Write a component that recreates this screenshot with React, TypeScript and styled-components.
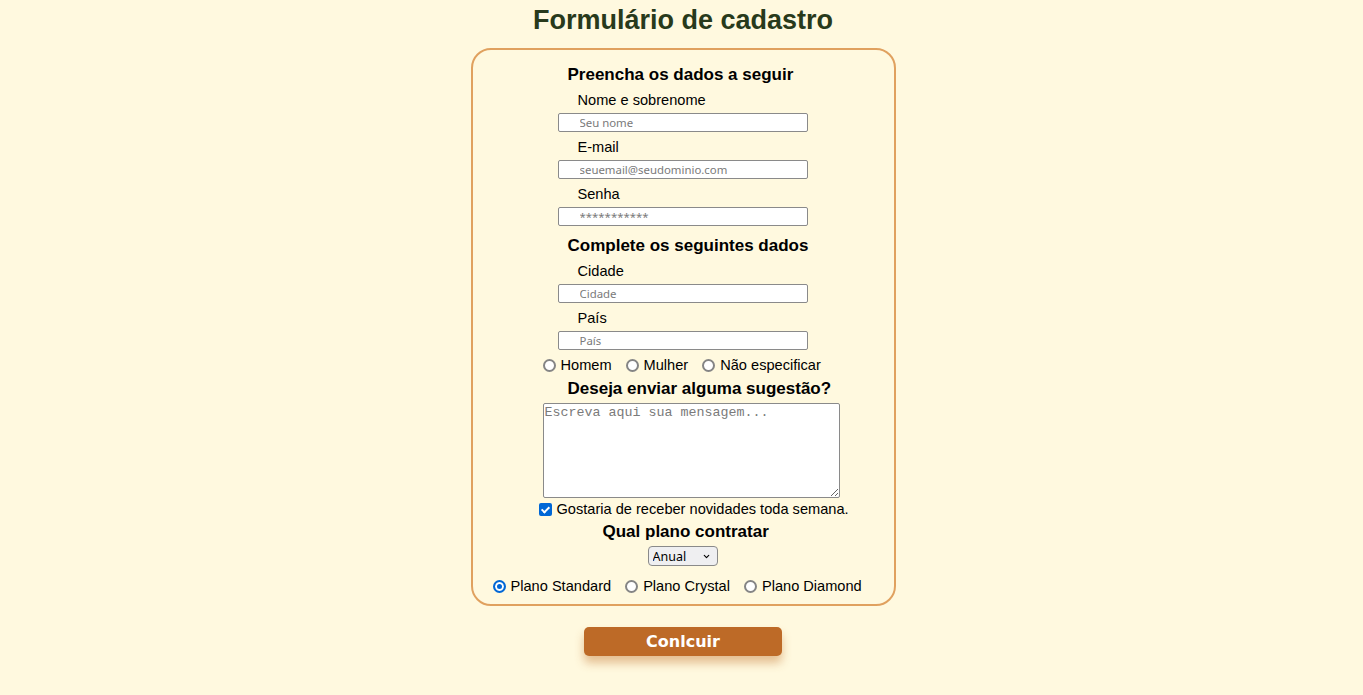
import React from "react";
import styled, { createGlobalStyle } from "styled-components";
import { ChevronDown } from "lucide-react";

const Global = createGlobalStyle`
  html, body { margin: 0; padding: 0; }
  body {
    background: #fff9df;
    font-family: "Liberation Sans", Arial, sans-serif;
    color: #000;
  }
`;

const Page = styled.main`
  display: flex;
  flex-direction: column;
  align-items: center;
  padding: 0 0 30px 3px;
`;

const Title = styled.h1`
  margin: 4px 0 12px;
  font-size: 27px;
  line-height: 32px;
  font-weight: 700;
  color: #283a1b;
`;

const Card = styled.form`
  box-sizing: border-box;
  width: 425px;
  border: 2px solid #e0a15f;
  border-radius: 20px;
  padding: 15px 0 9px;
  display: flex;
  flex-direction: column;
  align-items: flex-start;
`;

const Heading = styled.h2<{ $mt?: number; $indent: number }>`
  margin: ${(p) => p.$mt ?? 0}px 0 0 ${(p) => p.$indent}px;
  font-size: 17px;
  line-height: 20px;
  font-weight: 700;
  white-space: nowrap;
`;

const Field = styled.div`
  width: 250px;
  margin: 6px 0 0 85px;
  display: flex;
  flex-direction: column;
`;

const Label = styled.label`
  padding-left: 20px;
  font-size: 14.6px;
  line-height: 18px;
`;

const Input = styled.input`
  box-sizing: border-box;
  margin: 4px 0 0;
  width: 250px;
  height: 19px;
  padding: 0 0 0 21px;
  border: 1px solid #8a8a8a;
  border-radius: 2px;
  background: #fff;
  font-family: "Noto Sans", "Open Sans", sans-serif;
  font-size: 11.4px;
  outline: none;
  &::placeholder { color: #7a7a7a; }
`;

const OptionRow = styled.div<{ $mt: number; $gap: number; $indent: number }>`
  margin: ${(p) => p.$mt}px 0 0 ${(p) => p.$indent}px;
  display: flex;
  align-items: center;
  gap: ${(p) => p.$gap}px;
  font-size: 14.6px;
  line-height: 18px;
`;

const Option = styled.label`
  display: flex;
  align-items: center;
  gap: 5px;
  white-space: nowrap;
`;

const Radio = styled.input.attrs({ type: "radio" })`
  appearance: none;
  box-sizing: border-box;
  margin: 0;
  width: 13px;
  height: 13px;
  border: 2px solid #858585;
  border-radius: 50%;
  background: #fff;
  &:checked {
    border-color: #0067d6;
    box-shadow: inset 0 0 0 2px #fff, inset 0 0 0 5px #0067d6;
  }
`;

const Checkbox = styled.input.attrs({ type: "checkbox" })`
  appearance: none;
  position: relative;
  box-sizing: border-box;
  margin: 0;
  width: 13px;
  height: 13px;
  border: 2px solid #858585;
  border-radius: 2px;
  background: #fff;
  &:checked {
    border-color: #0067d6;
    background: #0067d6;
  }
  &:checked::after {
    content: "";
    position: absolute;
    left: 2.5px;
    top: 0px;
    width: 3px;
    height: 6px;
    border: solid #fff;
    border-width: 0 2px 2px 0;
    transform: rotate(45deg);
  }
`;

const TextArea = styled.textarea`
  box-sizing: border-box;
  margin: 4px 0 0 70px;
  width: 297px;
  height: 95px;
  padding: 1px 1px;
  border: 1px solid #8a8a8a;
  border-radius: 2px;
  background: #fff;
  font-family: "Liberation Mono", "Courier New", monospace;
  font-size: 13.33px;
  &::placeholder { color: #7a7a7a; }
`;

const SelectWrap = styled.div`
  position: relative;
  margin: 4px 0 0 175px;
  width: 70px;
  height: 20px;
`;

const Select = styled.select`
  appearance: none;
  box-sizing: border-box;
  width: 70px;
  height: 20px;
  padding: 0 0 0 4px;
  font-family: "Noto Sans", "Open Sans", sans-serif;
  font-size: 12.5px;
  color: #000;
  border: 1px solid #8a8a8a;
  border-radius: 4px;
  background: #efeff1;
`;

const Chevron = styled(ChevronDown)`
  position: absolute;
  right: 7px;
  top: 6px;
  pointer-events: none;
`;

const Submit = styled.button`
  margin-top: 21px;
  width: 198px;
  height: 29px;
  border: none;
  border-radius: 5px;
  background: #bd6a27;
  color: #fff;
  font-family: "DejaVu Sans", Verdana, sans-serif;
  font-weight: 700;
  font-size: 16px;
  box-shadow: 0 7px 10px rgba(196, 120, 50, 0.45);
  cursor: pointer;
`;

const fields1 = [
  { id: "nome", label: "Nome e sobrenome", ph: "Seu nome" },
  { id: "email", label: "E-mail", ph: "seuemail@seudominio.com" },
  { id: "senha", label: "Senha", ph: "***********" },
];
const fields2 = [
  { id: "cidade", label: "Cidade", ph: "Cidade" },
  { id: "pais", label: "País", ph: "País" },
];

export default function App() {
  return (
    <>
      <Global />
      <Page>
        <Title>Formulário de cadastro</Title>
        <Card onSubmit={(e) => e.preventDefault()}>
          <Heading $indent={95}>Preencha os dados a seguir</Heading>
          {fields1.map((f) => (
            <Field key={f.id}>
              <Label htmlFor={f.id}>{f.label}</Label>
              <Input id={f.id} type="text" placeholder={f.ph} />
            </Field>
          ))}
          <Heading $indent={95} $mt={10}>Complete os seguintes dados</Heading>
          {fields2.map((f) => (
            <Field key={f.id}>
              <Label htmlFor={f.id}>{f.label}</Label>
              <Input id={f.id} type="text" placeholder={f.ph} />
            </Field>
          ))}
          <OptionRow $mt={6} $gap={14} $indent={70}>
            <Option><Radio name="sexo" />Homem</Option>
            <Option><Radio name="sexo" />Mulher</Option>
            <Option><Radio name="sexo" />Não especificar</Option>
          </OptionRow>
          <Heading $indent={95} $mt={5}>Deseja enviar alguma sugestão?</Heading>
          <TextArea placeholder="Escreva aqui sua mensagem..." />
          <OptionRow $mt={2} $gap={0} $indent={66}>
            <Option><Checkbox defaultChecked />Gostaria de receber novidades toda semana.</Option>
          </OptionRow>
          <Heading $indent={130} $mt={4}>Qual plano contratar</Heading>
          <SelectWrap>
            <Select defaultValue="anual">
              <option value="anual">Anual</option>
              <option value="mensal">Mensal</option>
            </Select>
            <Chevron size={9} strokeWidth={3} />
          </SelectWrap>
          <OptionRow $mt={11} $gap={14} $indent={20}>
            <Option><Radio name="plano" defaultChecked />Plano Standard</Option>
            <Option><Radio name="plano" />Plano Crystal</Option>
            <Option><Radio name="plano" />Plano Diamond</Option>
          </OptionRow>
        </Card>
        <Submit type="button">Conlcuir</Submit>
      </Page>
    </>
  );
}
